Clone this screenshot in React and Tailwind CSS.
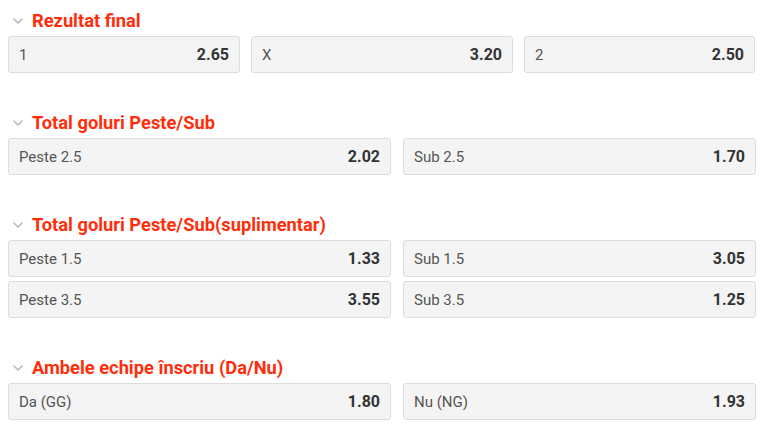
import React from "react";

const Chevron = () => (
  <svg width="10" height="6" viewBox="0 0 10 6" className="shrink-0">
    <path d="M1 1 L5 5 L9 1" fill="none" stroke="#b8b8b8" strokeWidth="1.6" strokeLinecap="round" strokeLinejoin="round" />
  </svg>
);

const Odd = ({ label, value }) => (
  <div className="flex h-[37px] items-center justify-between rounded-[3px] border border-[#dcdcdc] bg-[#f4f4f4] pl-[10px] pr-[10px] pt-[1px]">
    <span className="text-[15px] text-[#555555]">{label}</span>
    <span className="text-[16px] font-bold text-[#333333]">{value}</span>
  </div>
);

const Header = ({ title }) => (
  <div className="flex h-[36px] items-start pt-[12px]">
    <div className="flex w-[32px] justify-start pl-[13px] pt-[6px]">
      <Chevron />
    </div>
    <span className="text-[18.3px] font-bold leading-[18px] text-[#ff2d0a]">{title}</span>
  </div>
);

export default function App() {
  return (
    <div className="h-[432px] w-[768px] overflow-hidden bg-white" style={{ fontFamily: "Roboto, 'Liberation Sans', sans-serif" }}>
      <div className="mb-[29px]">
        <Header title="Rezultat final" />
        <div className="ml-[8px] grid w-[748px] grid-cols-[232px_262px_231px] gap-x-[11px]">
          <Odd label="1" value="2.65" />
          <Odd label="X" value="3.20" />
          <Odd label="2" value="2.50" />
        </div>
      </div>
      <div className="mb-[29px]">
        <Header title="Total goluri Peste/Sub" />
        <div className="ml-[8px] grid w-[748px] grid-cols-[383px_353px] gap-x-[12px]">
          <Odd label="Peste 2.5" value="2.02" />
          <Odd label="Sub 2.5" value="1.70" />
        </div>
      </div>
      <div className="mb-[29px]">
        <Header title="Total goluri Peste/Sub(suplimentar)" />
        <div className="ml-[8px] grid w-[748px] grid-cols-[383px_353px] gap-x-[12px] gap-y-[4px]">
          <Odd label="Peste 1.5" value="1.33" />
          <Odd label="Sub 1.5" value="3.05" />
          <Odd label="Peste 3.5" value="3.55" />
          <Odd label="Sub 3.5" value="1.25" />
        </div>
      </div>
      <div>
        <Header title="Ambele echipe înscriu (Da/Nu)" />
        <div className="ml-[8px] grid w-[748px] grid-cols-[383px_353px] gap-x-[12px]">
          <Odd label="Da (GG)" value="1.80" />
          <Odd label="Nu (NG)" value="1.93" />
        </div>
      </div>
    </div>
  );
}
